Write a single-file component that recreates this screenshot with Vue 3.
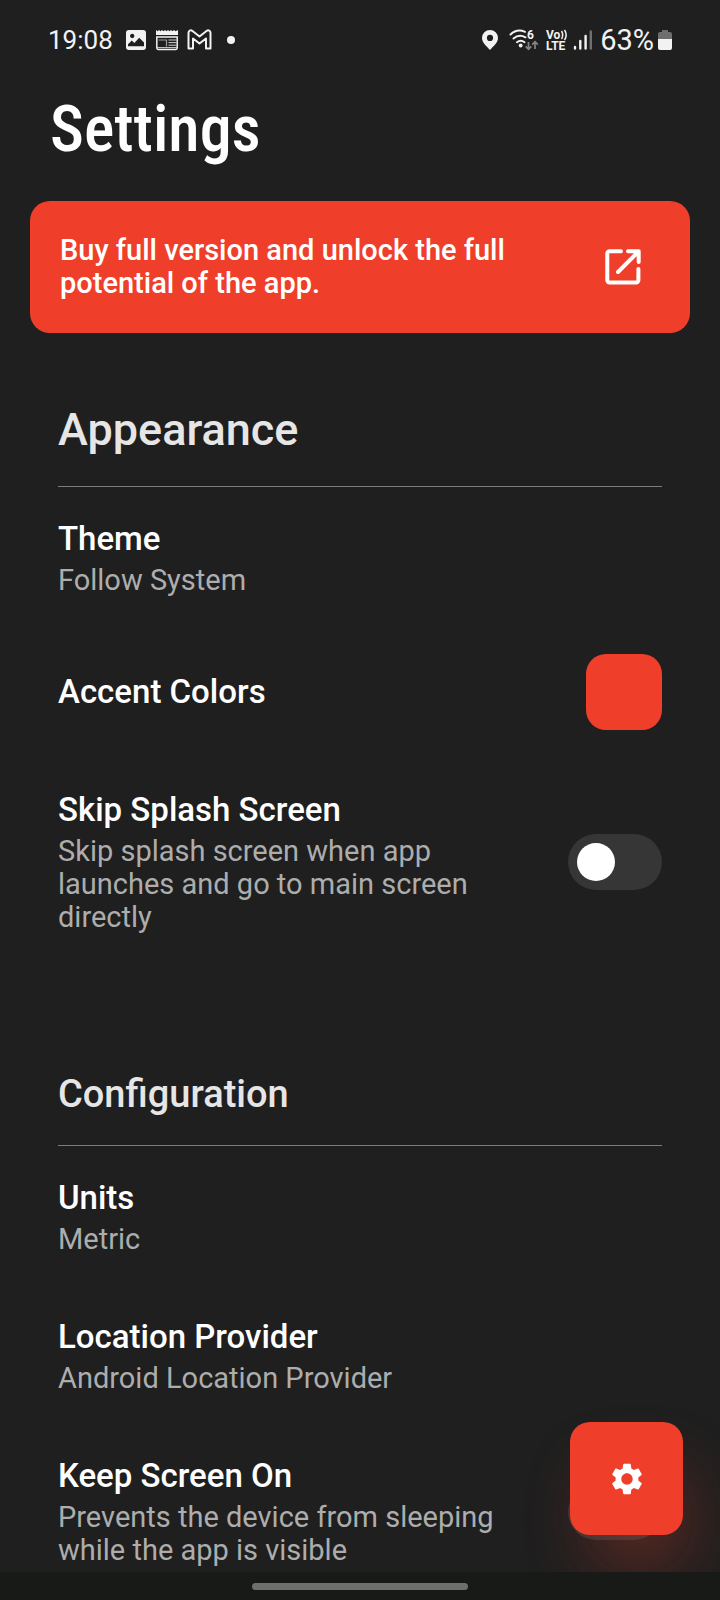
<script setup>
import { ref } from 'vue'

const sections = ref([
  {
    id: 'appearance',
    title: 'Appearance',
    large: true,
    items: [
      { id: 'theme', name: 'Theme', detail: 'Follow System', kind: 'choice' },
      { id: 'accent', name: 'Accent Colors', kind: 'color' },
      {
        id: 'splash',
        name: 'Skip Splash Screen',
        detail: 'Skip splash screen when app launches and go to main screen directly',
        kind: 'toggle',
        on: false,
      },
    ],
  },
  {
    id: 'configuration',
    title: 'Configuration',
    large: false,
    items: [
      { id: 'units', name: 'Units', detail: 'Metric', kind: 'choice' },
      { id: 'location', name: 'Location Provider', detail: 'Android Location Provider', kind: 'choice' },
      {
        id: 'awake',
        name: 'Keep Screen On',
        detail: 'Prevents the device from sleeping while the app is visible',
        kind: 'toggle',
        on: false,
      },
    ],
  },
])
</script>

<template>
  <div class="phone">
    <div class="status">
      <div class="status-group left">
        <span class="time">19:08</span>
        <svg width="22" height="22" viewBox="0 0 22 22" aria-hidden="true">
          <path fill="#f2f2f2" fill-rule="evenodd" d="M4 1h14a3 3 0 0 1 3 3v14a3 3 0 0 1-3 3H4a3 3 0 0 1-3-3V4a3 3 0 0 1 3-3ZM7.200 4.800a2.200 2.200 0 1 0 .01 0ZM3 17.200h16v-3.800l-4.800-4.600-4.900 5.200-2.500-2.400L3 15.200Z" />
        </svg>
        <svg width="22" height="22" viewBox="0 0 22 22" aria-hidden="true">
          <path d="M0 6V1l1.500 1.200L3 1l1.500 1.200L6 1l1.500 1.200L9 1l1.500 1.200L12 1l1.500 1.200L15 1l1.500 1.200L18 1l1.500 1.200L22 1v5Z" fill="#f2f2f2" />
          <path d="M.8 8v11a1.400 1.400 0 0 0 1.400 1.400h17.600a1.400 1.400 0 0 0 1.400-1.400V8Z" fill="none" stroke="#f2f2f2" stroke-width="1.500" />
          <path d="M12.500 11h8M12.500 13.600h8M12.500 16.200h8M1 18.600h20" stroke="#d0d0d0" stroke-width="1" />
          <path d="M2.500 11h8v6.500" fill="none" stroke="#9b9b9b" stroke-width="1.200" />
        </svg>
        <svg width="25" height="22" viewBox="0 0 25 22" aria-hidden="true">
          <path d="M1.500 19.500V4c0-2.400 2.200-3.400 4-2l7 5.500 7-5.500c1.800-1.400 4-.4 4 2v15.500h-4.500V9.500l-6.500 5-6.500-5v10Z" fill="none" stroke="#f2f2f2" stroke-width="2" stroke-linejoin="round" />
        </svg>
        <span class="dot"></span>
      </div>
      <div class="status-group right">
        <svg width="18" height="22" viewBox="0 0 18 22" aria-hidden="true">
          <path fill="#f2f2f2" fill-rule="evenodd" d="M9 1a8 8 0 0 0-8 8c0 5 5 8.500 8 12 3-3.500 8-7 8-12a8 8 0 0 0-8-8Zm0 4.800a3.100 3.100 0 1 1 0 6.200 3.100 3.100 0 0 1 0-6.200Z" />
        </svg>
        <svg class="wifi" width="30" height="22" viewBox="0 0 30 22" aria-hidden="true">
          <g fill="none" stroke="#f2f2f2" stroke-width="2" stroke-linecap="round">
            <path d="M1.500 5.500C6 1.300 11 .7 16 2.800" />
            <path d="M4.500 9.500c3.500-3 8-3.400 12-1.200" />
            <path d="M8 13.200c2.200-1.700 5.300-1.700 7.500 0" />
          </g>
          <circle cx="11.700" cy="16.500" r="1.900" fill="#f2f2f2" />
          <text x="18" y="10" class="tiny">6</text>
          <path d="M19.500 13v7M16.700 17.300l2.800 3 2.800-3M26 20v-7M23.200 15.700l2.800-3 2.800 3" fill="none" stroke="#858585" stroke-width="1.700" />
        </svg>
        <svg width="20" height="22" viewBox="0 0 20 22" aria-hidden="true">
          <text x="0" y="10" class="tiny">Vo</text>
          <path d="M15.500 2c1.500 2.500 1.500 5.500 0 8M18.500 1c2 3 2 7 0 10" fill="none" stroke="#f2f2f2" stroke-width="1.500" />
          <text x="0" y="21" class="tiny">LTE</text>
        </svg>
        <svg width="20" height="22" viewBox="0 0 20 22" aria-hidden="true">
          <g stroke-width="2.400" stroke-linecap="round" stroke="#f2f2f2">
            <path d="M2 18v1.500M7.300 12v7.500M12.600 7v12.500" />
            <path d="M17.800 2.500v17" stroke="#707070" />
          </g>
        </svg>
        <span class="percent">63%</span>
        <svg width="16" height="22" viewBox="0 0 16 22" aria-hidden="true">
          <path d="M5 1h6v2h2a2 2 0 0 1 2 2v5H1V5a2 2 0 0 1 2-2h2Z" fill="#6e6e6e" />
          <path d="M1 10h14v9a2 2 0 0 1-2 2H3a2 2 0 0 1-2-2Z" fill="#f2f2f2" />
        </svg>
      </div>
    </div>

    <main class="scroll">
      <h1>Settings</h1>

      <button class="banner" type="button">
        <span>Buy full version and unlock the full potential of the app.</span>
        <svg width="36" height="36" viewBox="0 0 36 36" aria-hidden="true">
          <g fill="none" stroke="#fff" stroke-width="4" stroke-linecap="round" stroke-linejoin="round">
            <path d="M16 2.300H4.500a2.200 2.200 0 0 0-2.200 2.200v26.700a2.200 2.200 0 0 0 2.200 2.200h26.700a2.200 2.200 0 0 0 2.200-2.200V20" />
            <path d="M23 2.300h10.700V13M33 3 13 23" />
          </g>
        </svg>
      </button>

      <section v-for="s in sections" :key="s.id" :class="{ large: s.large }">
        <h2>{{ s.title }}</h2>
        <template v-for="item in s.items" :key="item.id">
          <button v-if="item.kind === 'choice'" class="row" type="button">
            <span class="text">
              <span class="name">{{ item.name }}</span>
              <span class="detail">{{ item.detail }}</span>
            </span>
          </button>
          <div v-else-if="item.kind === 'color'" class="row color-row">
            <span class="text"><span :id="item.id" class="name">{{ item.name }}</span></span>
            <button class="swatch" type="button" :aria-labelledby="item.id"></button>
          </div>
          <label v-else class="row" :for="item.id">
            <span class="text">
              <span class="name">{{ item.name }}</span>
              <span class="detail">{{ item.detail }}</span>
            </span>
            <input :id="item.id" v-model="item.on" class="toggle" type="checkbox" role="switch" />
          </label>
        </template>
      </section>
    </main>

    <button class="fab" type="button" aria-label="Settings">
      <svg width="38" height="38" viewBox="0 0 24 24" aria-hidden="true">
        <path fill="#fff" d="M19.140 12.940c.04-.3.060-.61.060-.94 0-.32-.02-.64-.07-.94l2.030-1.580c.18-.14.230-.41.120-.61l-1.920-3.320c-.12-.22-.37-.29-.59-.22l-2.390.96c-.5-.38-1.030-.7-1.620-.94l-.36-2.540c-.04-.24-.24-.41-.48-.41h-3.840c-.24 0-.43.170-.47.410l-.36 2.540c-.59.240-1.130.570-1.620.940l-2.390-.96c-.22-.08-.47 0-.59.220L2.740 8.870c-.12.210-.08.470.12.610l2.030 1.580c-.05.3-.09.630-.09.940s.02.640.07.940l-2.030 1.580c-.18.140-.23.410-.12.610l1.920 3.320c.12.220.37.290.59.220l2.390-.96c.5.380 1.030.7 1.620.94l.36 2.540c.05.240.24.410.48.410h3.840c.24 0 .44-.17.470-.41l.36-2.540c.59-.24 1.130-.56 1.620-.94l2.390.96c.22.080.47 0 .59-.22l1.920-3.320c.12-.22.070-.47-.12-.61l-2.010-1.580zM12 15.600c-1.980 0-3.600-1.620-3.600-3.600s1.620-3.600 3.600-3.600 3.600 1.620 3.600 3.600-1.620 3.600-3.600 3.600z" />
      </svg>
    </button>

    <div class="navbar"><span class="handle"></span></div>
  </div>
</template>

<style>
body {
  background: #1f1f1f;
}
</style>

<style scoped>
.phone {
  position: relative;
  display: flex;
  flex-direction: column;
  height: 100vh;
  overflow: hidden;
  background: #1f1f1f;
  color: #fff;
  font-family: Roboto, "Liberation Sans", sans-serif;
}

button {
  border: 0;
  padding: 0;
  font: inherit;
  color: inherit;
  text-align: left;
  background: none;
  cursor: pointer;
}

.status {
  flex: none;
  display: flex;
  justify-content: space-between;
  align-items: center;
  height: 80px;
  padding: 0 47px 0 48px;
  color: #f2f2f2;
}

.status svg {
  overflow: visible;
}

.status-group {
  display: flex;
  align-items: center;
  gap: 9px;
}

.left svg:first-of-type {
  margin-left: 3px;
}

.time {
  font-size: 26px;
}

.dot {
  width: 8px;
  height: 8px;
  margin-left: 6px;
  border-radius: 50%;
  background: #f2f2f2;
}

.wifi {
  margin-left: 3px;
}

.right {
  gap: 7px;
}

.percent {
  margin-right: -4px;
  font-size: 29px;
}

.tiny {
  fill: #f2f2f2;
  font-size: 12px;
  font-weight: 700;
}

.scroll {
  flex: 1;
  min-height: 0;
  overflow-y: auto;
  scrollbar-width: none;
}

h1 {
  margin: 0;
  padding: 10px 50px 31px;
  font-family: "Roboto Condensed", "Liberation Sans Narrow", Roboto, sans-serif;
  font-size: 64px;
  font-weight: 500;
  line-height: 80px;
}

.banner {
  display: flex;
  align-items: center;
  justify-content: space-between;
  gap: 60px;
  width: calc(100% - 60px);
  min-height: 132px;
  margin: 0 30px;
  padding: 0 49px 0 30px;
  border-radius: 20px;
  background: #ef3f2b;
  font-size: 29px;
  font-weight: 500;
  line-height: 33px;
}

.banner svg {
  flex: none;
}

section {
  padding: 0 58px;
}

h2 {
  margin: 0;
  padding: 107px 0 27px;
  border-bottom: 1px solid #7c7c7c;
  color: #e6e6e6;
  font-size: 38px;
  font-weight: 500;
  line-height: 48px;
}

.large h2 {
  padding-top: 70px;
  padding-bottom: 29px;
  font-size: 45px;
  line-height: 54px;
}

.row {
  display: flex;
  align-items: center;
  justify-content: space-between;
  gap: 60px;
  width: 100%;
  padding: 32px 0 29px;
}

.color-row {
  padding: 28px 0;
}

.text {
  display: flex;
  flex-direction: column;
  gap: 5px;
}

.name {
  font-size: 33px;
  font-weight: 500;
  line-height: 40px;
}

.detail {
  color: #adadad;
  font-size: 29px;
  line-height: 33px;
}

.swatch {
  flex: none;
  width: 76px;
  height: 76px;
  border-radius: 20px;
  background: #ef3f2b;
}

.toggle {
  flex: none;
  appearance: none;
  display: flex;
  width: 94px;
  height: 56px;
  margin: 0;
  padding: 9px;
  box-sizing: border-box;
  border-radius: 28px;
  background: #363636;
  cursor: pointer;
}

.toggle::before {
  content: "";
  width: 38px;
  height: 38px;
  border-radius: 50%;
  background: #fff;
}

.toggle:checked {
  justify-content: flex-end;
  background: #ef3f2b;
}

.fab {
  position: absolute;
  right: 37px;
  bottom: 65px;
  display: flex;
  align-items: center;
  justify-content: center;
  width: 113px;
  height: 113px;
  border-radius: 20px;
  background: #ef3f2b;
  box-shadow: 12px 40px 64px -8px rgba(239, 63, 43, 0.28);
}

.navbar {
  position: relative;
  z-index: 1;
  flex: none;
  display: flex;
  align-items: center;
  justify-content: center;
  height: 28px;
  background: #181a17;
}

.handle {
  width: 30%;
  height: 7px;
  border-radius: 4px;
  background: #6e6e6e;
}
</style>
